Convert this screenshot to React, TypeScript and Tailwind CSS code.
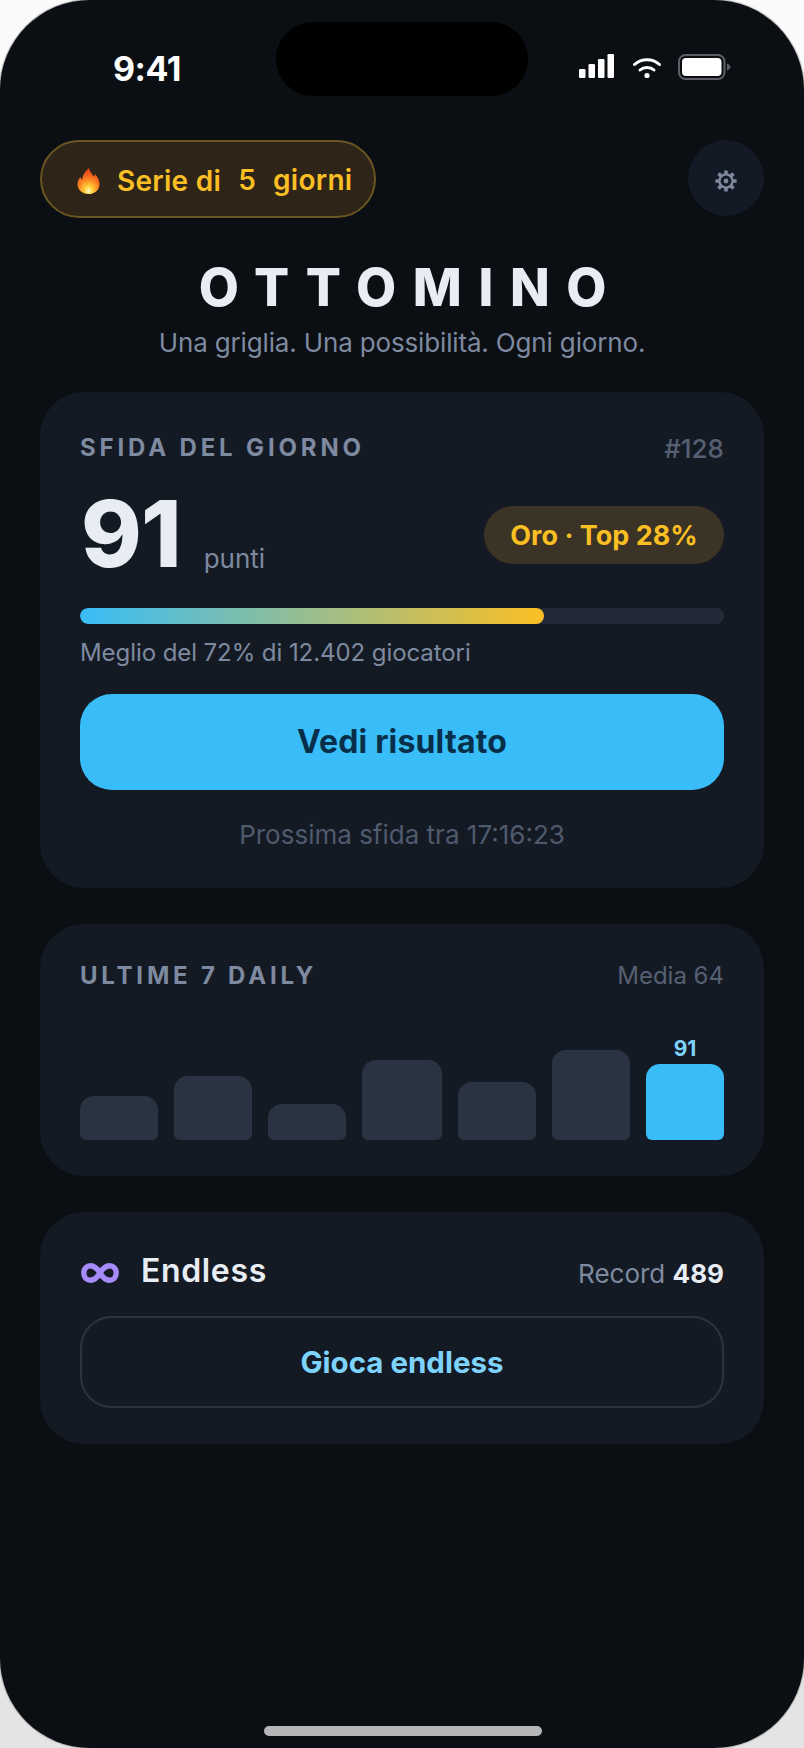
import React from "react";

function Signal() {
  return (
    <svg width="36" height="24" viewBox="0 0 36 24" fill="#fff">
      <rect x="0" y="15" width="6.5" height="9" rx="1.2" />
      <rect x="9.5" y="10" width="6.5" height="14" rx="1.2" />
      <rect x="19" y="5" width="6.5" height="19" rx="1.2" />
      <rect x="28.5" y="0" width="6.5" height="24" rx="1.2" />
    </svg>
  );
}

function Wifi() {
  return (
    <svg width="28" height="22" viewBox="0 0 28 22" fill="none" stroke="#fff" strokeWidth="3" strokeLinecap="round">
      <path d="M1.5 7.5C8.5 1 19.5 1 26.5 7.5" />
      <path d="M7 13C10.8 9.6 17.2 9.6 21 13" />
      <circle cx="14" cy="18.5" r="2.6" fill="#fff" stroke="none" />
    </svg>
  );
}

function Battery() {
  return (
    <svg width="53" height="26" viewBox="0 0 53 26" fill="none">
      <rect x="1" y="1" width="45.5" height="24" rx="6.5" stroke="#5c5f66" strokeWidth="2" />
      <rect x="4" y="4" width="39.5" height="18" rx="4" fill="#fff" />
      <path d="M49 9.5C51 10.2 52.5 11.5 52.5 13S51 15.8 49 16.5Z" fill="#5c5f66" />
    </svg>
  );
}

function Flame() {
  return (
    <svg width="23" height="28" viewBox="0 0 24 28">
      <defs>
        <radialGradient id="fl" cx="50%" cy="88%" r="78%">
          <stop offset="0%" stopColor="#fffbd0" />
          <stop offset="22%" stopColor="#ffd23c" />
          <stop offset="55%" stopColor="#fb8a22" />
          <stop offset="100%" stopColor="#e8401e" />
        </radialGradient>
      </defs>
      <path
        d="M12.5 0.5C13.5 5 16 6.5 17.5 9.5C18.4 8.6 18.6 7.6 18.5 6.5C21.5 9.5 23.5 13.5 23.5 17C23.5 23.5 18.5 27.5 12 27.5C5.5 27.5 0.5 23.5 0.5 17.5C0.5 14 2 11.5 3.8 9.5C3.9 11 4.5 12 5.5 12.8C5.5 8 8.5 4 12.5 0.5Z"
        fill="url(#fl)"
      />
    </svg>
  );
}

function Gear() {
  const teeth = [0, 45, 90, 135, 180, 225, 270, 315];
  return (
    <svg width="22" height="22" viewBox="0 0 22 22" fill="none">
      {teeth.map((a) => (
        <rect key={a} x="9.2" y="0.4" width="3.6" height="3.6" rx="0.5" fill="#7e899d" transform={`rotate(${a} 11 11)`} />
      ))}
      <circle cx="11" cy="11" r="6.6" stroke="#7e899d" strokeWidth="2.4" />
      <circle cx="11" cy="11" r="2.4" fill="#7e899d" />
    </svg>
  );
}

function Infinity_() {
  return (
    <svg width="38" height="20" viewBox="0 0 38 20" fill="none" stroke="#a78bfa" strokeWidth="5.4">
      <path d="M19 10C16 5 13 2.8 9.5 2.8C5.5 2.8 2.8 6 2.8 10S5.5 17.2 9.5 17.2C13 17.2 16 15 19 10C22 5 25 2.8 28.5 2.8C32.5 2.8 35.2 6 35.2 10S32.5 17.2 28.5 17.2C25 17.2 22 15 19 10Z" />
    </svg>
  );
}

const bars = [
  { w: "w-[78px]", h: "h-[44px]" },
  { w: "w-[78px]", h: "h-[64px]" },
  { w: "w-[78px]", h: "h-[36px]" },
  { w: "w-[80px]", h: "h-[80px]" },
  { w: "w-[78px]", h: "h-[58px]" },
  { w: "w-[78px]", h: "h-[90px]" },
];

export default function App() {
  return (
    <div className="w-[804px] h-[1748px] bg-gradient-to-b from-[#fbfbfb] to-[#e4e4e4] overflow-hidden font-['Inter',sans-serif]">
      <div className="w-full h-full bg-[#0b0e13] rounded-[90px] flex flex-col relative overflow-hidden shadow-[0_0_1px_1px_#b4b4b4]">
        <div className="absolute left-[276px] top-[22px] w-[252px] h-[74px] bg-black rounded-[37px]" />

        <div className="h-[140px] shrink-0 flex items-start justify-between pt-[54px] pl-[113px] pr-[73px]">
          <span className="text-white text-[34px] font-bold leading-[28px] mt-[1px] tracking-[-0.5px]">9:41</span>
          <div className="flex items-start gap-[18px]">
            <Signal />
            <div className="mt-[3px]"><Wifi /></div>
            <div className="-ml-[1px]"><Battery /></div>
          </div>
        </div>

        <div className="px-[40px] flex items-start justify-between">
          <div className="h-[78px] w-[336px] rounded-full border-2 border-[#6b5522] bg-[#2e2418] flex items-center pl-[35px] text-[#fbbf24] text-[28px] font-semibold tracking-[0.01em]">
            <div className="mt-[4px] shrink-0"><Flame /></div>
            <span className="ml-[17px] mt-[4px]">Serie di</span>
            <span className="ml-[17px] mt-[1px]">5</span>
            <span className="ml-[17px] mt-[2px]">giorni</span>
          </div>
          <div className="w-[76px] h-[76px] rounded-full bg-[#141a25] flex items-center justify-center pt-[6px]">
            <Gear />
          </div>
        </div>

        <div className="text-center text-[#e8ecf3] text-[52px] font-extrabold tracking-[0.32em] leading-[60px] mt-[40px] pl-[18px]">
          OTTOMINO
        </div>
        <div className="text-center text-[#7e8aa0] text-[26px] leading-[34px] mt-[8px] tracking-[-0.006em]">
          Una griglia. Una possibilità. Ogni giorno.
        </div>

        <div className="mx-[40px] mt-[32px] h-[496px] rounded-[44px] bg-[#141a24] px-[40px] pt-[42px] flex flex-col">
          <div className="flex items-center justify-between h-[28px]">
            <span className="text-[#7e8aa0] text-[24px] font-bold tracking-[0.16em]">SFIDA DEL GIORNO</span>
            <span className="text-[26px] font-medium text-[#566072]">#128</span>
          </div>
          <div className="flex items-center justify-between h-[96px] mt-[24px]">
            <div className="flex items-end pl-[1px]">
              <span className="text-[#e8ecf3] text-[92px] font-extrabold leading-[96px] tracking-[-0.01em]">91</span>
              <span className="text-[#7e8aa0] text-[26px] leading-[34px] ml-[23px] mb-[6px]">punti</span>
            </div>
            <div className="h-[58px] w-[240px] mt-[2px] pt-[3px] rounded-full bg-[#3a3326] flex items-center justify-center text-[#fbbf24] text-[27px] font-bold">
              Oro · Top 28%
            </div>
          </div>
          <div className="h-[16px] rounded-full bg-[#222938] mt-[26px] overflow-hidden">
            <div className="h-full w-[72%] rounded-full bg-linear-to-r/srgb from-[#38bdf8] to-[#fbbf24]" />
          </div>
          <div className="text-[#7e8aa0] text-[24px] leading-[32px] mt-[13px] tracking-[-0.003em]">Meglio del 72% di 12.402 giocatori</div>
          <div className="h-[96px] rounded-[32px] bg-[#38bdf8] mt-[25px] flex items-center justify-center text-[#082f49] text-[32px] font-bold tracking-[0.005em]">
            Vedi risultato
          </div>
          <div className="text-center text-[#4f5a6c] text-[26px] leading-[32px] mt-[29px]">Prossima sfida tra 17:16:23</div>
        </div>

        <div className="mx-[40px] mt-[36px] h-[252px] rounded-[44px] bg-[#141a24] px-[40px] pt-[38px] flex flex-col">
          <div className="flex items-center justify-between h-[28px]">
            <span className="text-[#7e8aa0] text-[24px] font-bold tracking-[0.158em]">ULTIME 7 DAILY</span>
            <span className="text-[#566072] text-[24px]">Media 64</span>
          </div>
          <div className="h-[112px] mt-[38px] flex items-end justify-between">
            {bars.map((b, i) => (
              <div key={i} className={`${b.w} ${b.h} bg-[#2a3342] rounded-t-[14px] rounded-b-[6px]`} />
            ))}
            <div className="flex flex-col items-center">
              <span className="text-[#7dd3fc] text-[21px] font-bold leading-[26px] mb-[2px]">91</span>
              <div className="w-[78px] h-[76px] bg-[#38bdf8] rounded-t-[14px] rounded-b-[6px]" />
            </div>
          </div>
        </div>

        <div className="mx-[40px] mt-[36px] h-[232px] rounded-[44px] bg-[#141a24] px-[40px] pt-[36px] flex flex-col">
          <div className="flex items-center justify-between h-[40px]">
            <div className="flex items-center">
              <div className="mt-[10px] ml-[1px]"><Infinity_ /></div>
              <span className="text-[#e8ecf3] text-[32px] font-semibold ml-[22px] mt-[5px] tracking-[0.02em]">Endless</span>
            </div>
            <div className="text-[#7e8aa0] text-[26px] mt-[10px]">
              Record <span className="text-[#e8ecf3] font-bold">489</span>
            </div>
          </div>
          <div className="h-[92px] mt-[28px] pt-[1px] rounded-[32px] border-2 border-[#2a3342] flex items-center justify-center text-[#7dd3fc] text-[29.5px] font-bold">
            Gioca endless
          </div>
        </div>

        <div className="absolute left-[264px] bottom-[12px] w-[278px] h-[10px] rounded-full bg-[#b5b6b8]" />
      </div>
    </div>
  );
}
